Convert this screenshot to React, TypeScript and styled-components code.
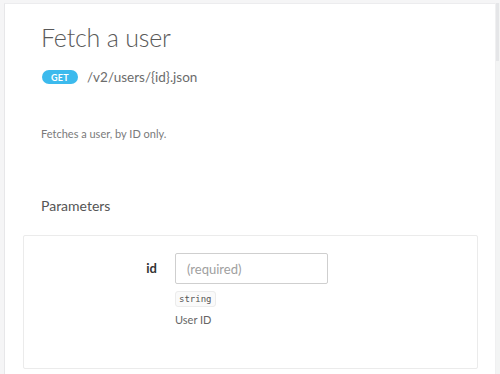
import React from "react";
import styled, { createGlobalStyle } from "styled-components";

const GlobalStyle = createGlobalStyle`
  html, body {
    margin: 0;
    padding: 0;
    background: #f5f5f6;
  }
  body {
    font-family: Lato, "Open Sans", "Liberation Sans", sans-serif;
  }
`;

const App: React.FC = () => {
  return (
    <>
      <GlobalStyle />
      <StyledFrame>
        <StyledPanel>
          <StyledHeader>
            <StyledTitle>Fetch a user</StyledTitle>
            <StyledEndpoint>
              <StyledMethod>GET</StyledMethod>
              <StyledPath>/v2/users/{"{id}"}.json</StyledPath>
            </StyledEndpoint>
            <StyledDescription>Fetches a user, by ID only.</StyledDescription>
            <StyledSectionTitle>Parameters</StyledSectionTitle>
          </StyledHeader>
          <StyledCard>
            <StyledParamRow>
              <StyledParamName>id</StyledParamName>
              <StyledParamBody>
                <StyledInput placeholder="(required)" />
                <StyledType>string</StyledType>
                <StyledParamDesc>User ID</StyledParamDesc>
              </StyledParamBody>
            </StyledParamRow>
          </StyledCard>
        </StyledPanel>
        <StyledScrollbar>
          <StyledThumb />
        </StyledScrollbar>
      </StyledFrame>
    </>
  );
};

//Styled-Components
const StyledFrame = styled.div`
  display: flex;
  width: 500px;
  height: 374px;
  padding: 3px 0 0 4px;
  box-sizing: border-box;
  overflow: hidden;
`;

const StyledPanel = styled.main`
  flex: 1;
  background: #ffffff;
  border-left: 1px solid #e7e7e9;
  border-top: 1px solid #ececee;
  padding: 0 17px 0 18px;
`;

const StyledHeader = styled.div`
  padding: 17px 18px 0;
`;

const StyledTitle = styled.h1`
  margin: 0;
  font-size: 25px;
  line-height: 32px;
  font-weight: 300;
  color: #595959;
  letter-spacing: -0.2px;
`;

const StyledEndpoint = styled.div`
  display: flex;
  align-items: center;
  gap: 9px;
  margin-top: 16px;
  padding-left: 1px;
`;

const StyledMethod = styled.span`
  display: inline-flex;
  align-items: center;
  justify-content: center;
  width: 36px;
  height: 14px;
  border-radius: 7px;
  background: #3cbaed;
  color: #ffffff;
  font-size: 9px;
  font-weight: 700;
  letter-spacing: 0.3px;
`;

const StyledPath = styled.span`
  font-size: 13.5px;
  color: #6c6c6c;
  font-weight: 400;
`;

const StyledDescription = styled.p`
  margin: 42px 0 0;
  font-size: 11px;
  line-height: 14px;
  color: #7a7a7a;
`;

const StyledSectionTitle = styled.h2`
  margin: 56px 0 0;
  font-size: 14px;
  line-height: 18px;
  font-weight: 400;
  color: #555555;
`;

const StyledCard = styled.section`
  margin-top: 20px;
  height: 134px;
  border: 1px solid #ebebeb;
  border-radius: 2px;
  box-sizing: border-box;
  padding: 17px 0 0;
`;

const StyledParamRow = styled.div`
  display: grid;
  grid-template-columns: 133px 153px;
  column-gap: 18px;
`;

const StyledParamName = styled.div`
  text-align: right;
  font-size: 13px;
  font-weight: 700;
  color: #333333;
  line-height: 30px;
`;

const StyledParamBody = styled.div`
  display: flex;
  flex-direction: column;
  align-items: flex-start;
`;

const StyledInput = styled.input`
  width: 153px;
  height: 31px;
  box-sizing: border-box;
  border: 1px solid #cfcfcf;
  border-radius: 2px;
  padding: 0 11px;
  font-family: Lato, "Liberation Sans", sans-serif;
  font-size: 13px;
  color: #333;
  outline: none;
  &::placeholder {
    color: #a0a0a0;
  }
`;

const StyledType = styled.code`
  margin-top: 7px;
  padding: 1px 3px;
  font-family: "DejaVu Sans Mono", "Liberation Mono", monospace;
  font-size: 9px;
  line-height: 12px;
  color: #555;
  background: #fafafa;
  border: 1px solid #ececec;
  border-radius: 3px;
`;

const StyledParamDesc = styled.span`
  margin-top: 6px;
  font-size: 11px;
  color: #666666;
`;

const StyledScrollbar = styled.div`
  width: 4px;
  background: #f3f4f4;
  border-left: 1px solid #f0f0f1;
`;

const StyledThumb = styled.div`
  width: 3px;
  height: 58px;
  background: #e5e6e8;
`;

export default App;
